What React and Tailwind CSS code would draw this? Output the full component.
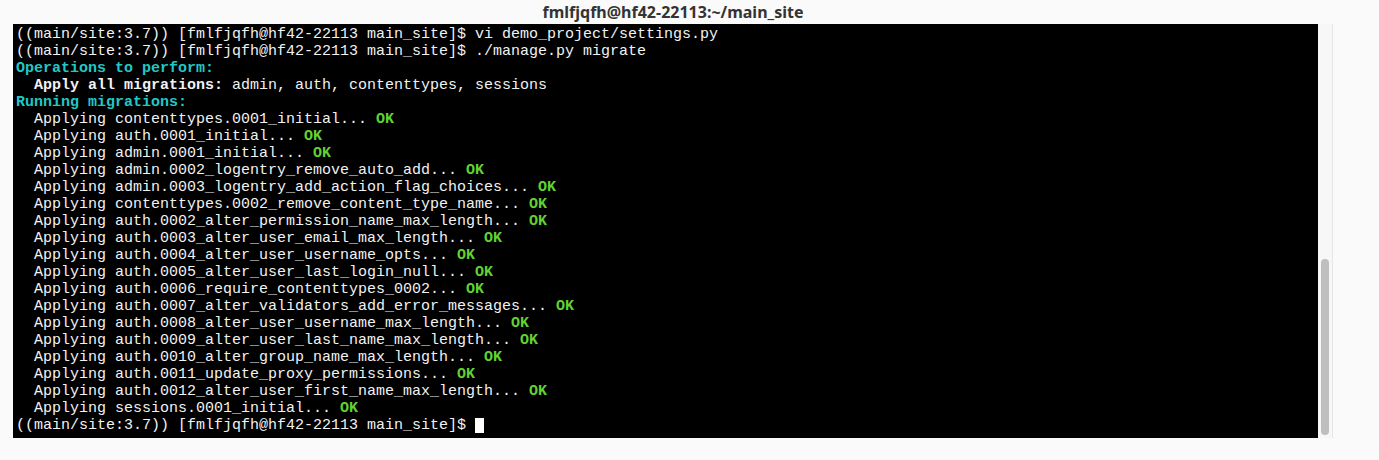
import React from "react";

const PROMPT = "((main/site:3.7)) [fmlfjqfh@hf42-22113 main_site]$ ";

const migrations = [
  "contenttypes.0001_initial",
  "auth.0001_initial",
  "admin.0001_initial",
  "admin.0002_logentry_remove_auto_add",
  "admin.0003_logentry_add_action_flag_choices",
  "contenttypes.0002_remove_content_type_name",
  "auth.0002_alter_permission_name_max_length",
  "auth.0003_alter_user_email_max_length",
  "auth.0004_alter_user_username_opts",
  "auth.0005_alter_user_last_login_null",
  "auth.0006_require_contenttypes_0002",
  "auth.0007_alter_validators_add_error_messages",
  "auth.0008_alter_user_username_max_length",
  "auth.0009_alter_user_last_name_max_length",
  "auth.0010_alter_group_name_max_length",
  "auth.0011_update_proxy_permissions",
  "auth.0012_alter_user_first_name_max_length",
  "sessions.0001_initial",
];

export default function App() {
  return (
    <div className="w-full h-[460px] bg-[#fafafa] overflow-hidden">
      <div className="ml-[13px] w-[1320px] flex flex-col">
        <div
          className="h-[24px] flex items-center justify-center text-[16px] font-bold text-[#333333] leading-none"
          style={{ fontFamily: '"Noto Sans", "Open Sans", sans-serif' }}
        >
          fmlfjqfh@hf42-22113:~/main_site
        </div>
        <div className="flex h-[414px]">
          <div
            className="w-[1305px] h-full bg-black pl-[3px] pt-[2px] text-[15px] leading-[17px] text-[#f2f2f2] whitespace-pre"
            style={{ fontFamily: '"Liberation Mono", "Courier New", monospace' }}
          >
            <div>{PROMPT}vi demo_project/settings.py</div>
            <div>{PROMPT}./manage.py migrate</div>
            <div className="font-bold text-[#22c7c7]">Operations to perform:</div>
            <div>
              {"  "}
              <span className="font-bold">Apply all migrations:</span> admin, auth, contenttypes, sessions
            </div>
            <div className="font-bold text-[#22c7c7]">Running migrations:</div>
            {migrations.map((m) => (
              <div key={m}>
                {"  Applying " + m + "... "}
                <span className="font-bold text-[#62d132]">OK</span>
              </div>
            ))}
            <div className="flex items-center">
              <span>{PROMPT}</span>
              <span className="inline-block w-[9px] h-[15px] bg-white" />
            </div>
          </div>
          <div className="w-[15px] h-full bg-[#f7f7f7] border-r border-[#e6e6e6] flex flex-col justify-end items-center pb-[3px] pr-[1px]">
            <div className="w-[8px] h-[176px] rounded-full bg-[#bfbfbf]" />
          </div>
        </div>
      </div>
    </div>
  );
}
